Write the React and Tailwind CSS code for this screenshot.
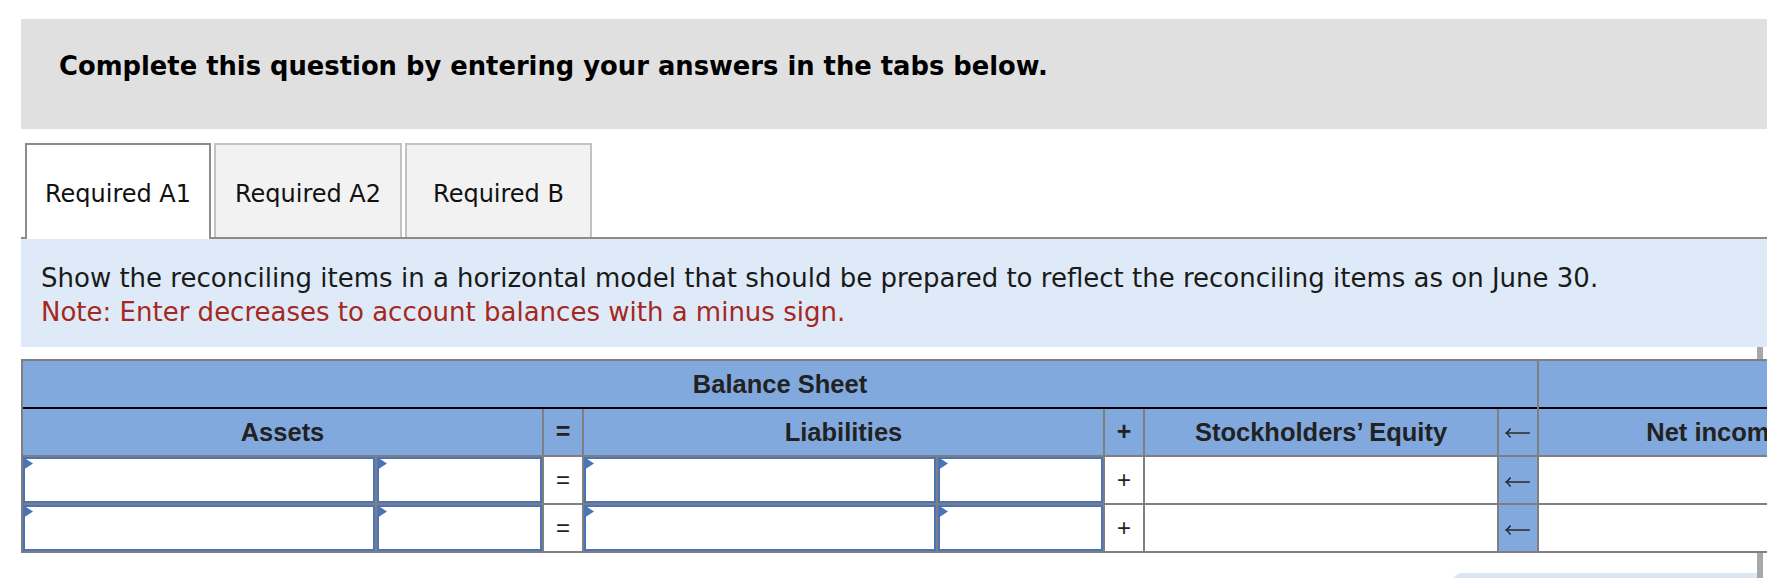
import React from "react";

function Arrow() {
  return (
    <svg width="28" height="12" viewBox="0 0 28 12" className="block">
      <path d="M2 6 H26" stroke="#222" strokeWidth="1.4" fill="none" />
      <path d="M6.5 1.5 Q4.5 4.5 2 6 Q4.5 7.5 6.5 10.5" stroke="#222" strokeWidth="1.4" fill="none" />
    </svg>
  );
}

function InputCell() {
  return (
    <div className="relative bg-white border-2 border-[#4a73b8]">
      <svg width="10" height="13" viewBox="0 0 10 13" className="absolute -left-[2px] -top-[2px]">
        <polygon points="0,0 10,6.5 0,13" fill="#4a73b8" />
      </svg>
    </div>
  );
}

function Sym({ children, bg = "bg-white" }) {
  return (
    <div className={`${bg} flex items-center justify-center text-[24px] text-[#222] font-['Liberation_Sans',Arial,sans-serif]`}>
      {children}
    </div>
  );
}

export default function App() {
  const headBlue = "bg-[#81a9de]";
  return (
    <div className="w-full h-[578px] overflow-hidden bg-white">
      <div className="pt-[19px] pl-[21px]">
        <div className="h-[110px] bg-[#e0e0e0] pl-[38px] pt-[32px]">
          <p className="font-['DejaVu_Sans',Verdana,sans-serif] font-bold text-[25.8px] leading-[30px] text-black">
            Complete this question by entering your answers in the tabs below.
          </p>
        </div>

        <div className="mt-[14px] flex items-end border-b-2 border-[#8c8c8c] pl-[4px] gap-[3px] font-['DejaVu_Sans',Verdana,sans-serif] text-[24px] text-[#111]">
          <div className="w-[186px] h-[96px] -mb-[2px] bg-white border-2 border-b-0 border-[#8c8c8c] flex items-center justify-center pt-[3px]">
            Required A1
          </div>
          <div className="w-[188px] h-[94px] bg-[#f2f2f2] border-2 border-b-0 border-[#c2c2c2] flex items-center justify-center pt-[5px]">
            Required A2
          </div>
          <div className="w-[187px] h-[94px] bg-[#f2f2f2] border-2 border-b-0 border-[#c2c2c2] flex items-center justify-center pt-[5px]">
            Required B
          </div>
        </div>

        <div className="h-[108px] bg-[#deeaf7] pl-[20px] pt-[22px] font-['DejaVu_Sans',Verdana,sans-serif] text-[26px] leading-[34px]">
          <p className="text-[#1a1a1a]">
            Show the reconciling items in a horizontal model that should be prepared to reflect the reconciling items as on June 30.
          </p>
          <p className="text-[#a5281f]">Note: Enter decreases to account balances with a minus sign.</p>
        </div>
      </div>

      <div className="ml-[21px] mr-[4px] h-[231px] border-r-[6px] border-[#a8a8a8] pt-[12px]">
        <div className="grid w-max gap-[2px] bg-[#7f7f7f] p-[2px] grid-cols-[352px_165px_38px_352px_165px_38px_352px_38px_352px] auto-rows-[46px] font-['Liberation_Sans',Arial,sans-serif] text-[#222]">
          <div className={`col-span-8 ${headBlue} -mb-[2px] border-b-2 border-black flex items-center justify-center font-bold text-[25.5px]`}>
            Balance Sheet
          </div>
          <div className={`${headBlue} -mb-[2px] border-b-2 border-black`} />

          <div className={`col-span-2 ${headBlue} flex items-center justify-center font-bold text-[25.5px]`}>Assets</div>
          <div className={`${headBlue} flex items-center justify-center font-bold text-[25px]`}>=</div>
          <div className={`col-span-2 ${headBlue} flex items-center justify-center font-bold text-[25.5px]`}>Liabilities</div>
          <div className={`${headBlue} flex items-center justify-center font-bold text-[25px]`}>+</div>
          <div className={`${headBlue} flex items-center justify-center font-bold text-[25.5px]`}>Stockholders’ Equity</div>
          <div className={`${headBlue} flex items-center justify-center pt-[2px]`}><Arrow /></div>
          <div className={`${headBlue} flex items-center justify-center font-bold text-[25.5px]`}>Net income</div>

          {[0, 1].map((r) => (
            <React.Fragment key={r}>
              <InputCell />
              <InputCell />
              <Sym>=</Sym>
              <InputCell />
              <InputCell />
              <Sym>+</Sym>
              <div className="bg-white" />
              <div className={`${headBlue} flex items-center justify-center pt-[3px]`}><Arrow /></div>
              <div className="bg-white" />
            </React.Fragment>
          ))}
        </div>
        <div className="mt-[20px] ml-auto w-[305px] h-[20px] rounded-tl-[10px] bg-[#dce6f1]" />
      </div>
    </div>
  );
}
